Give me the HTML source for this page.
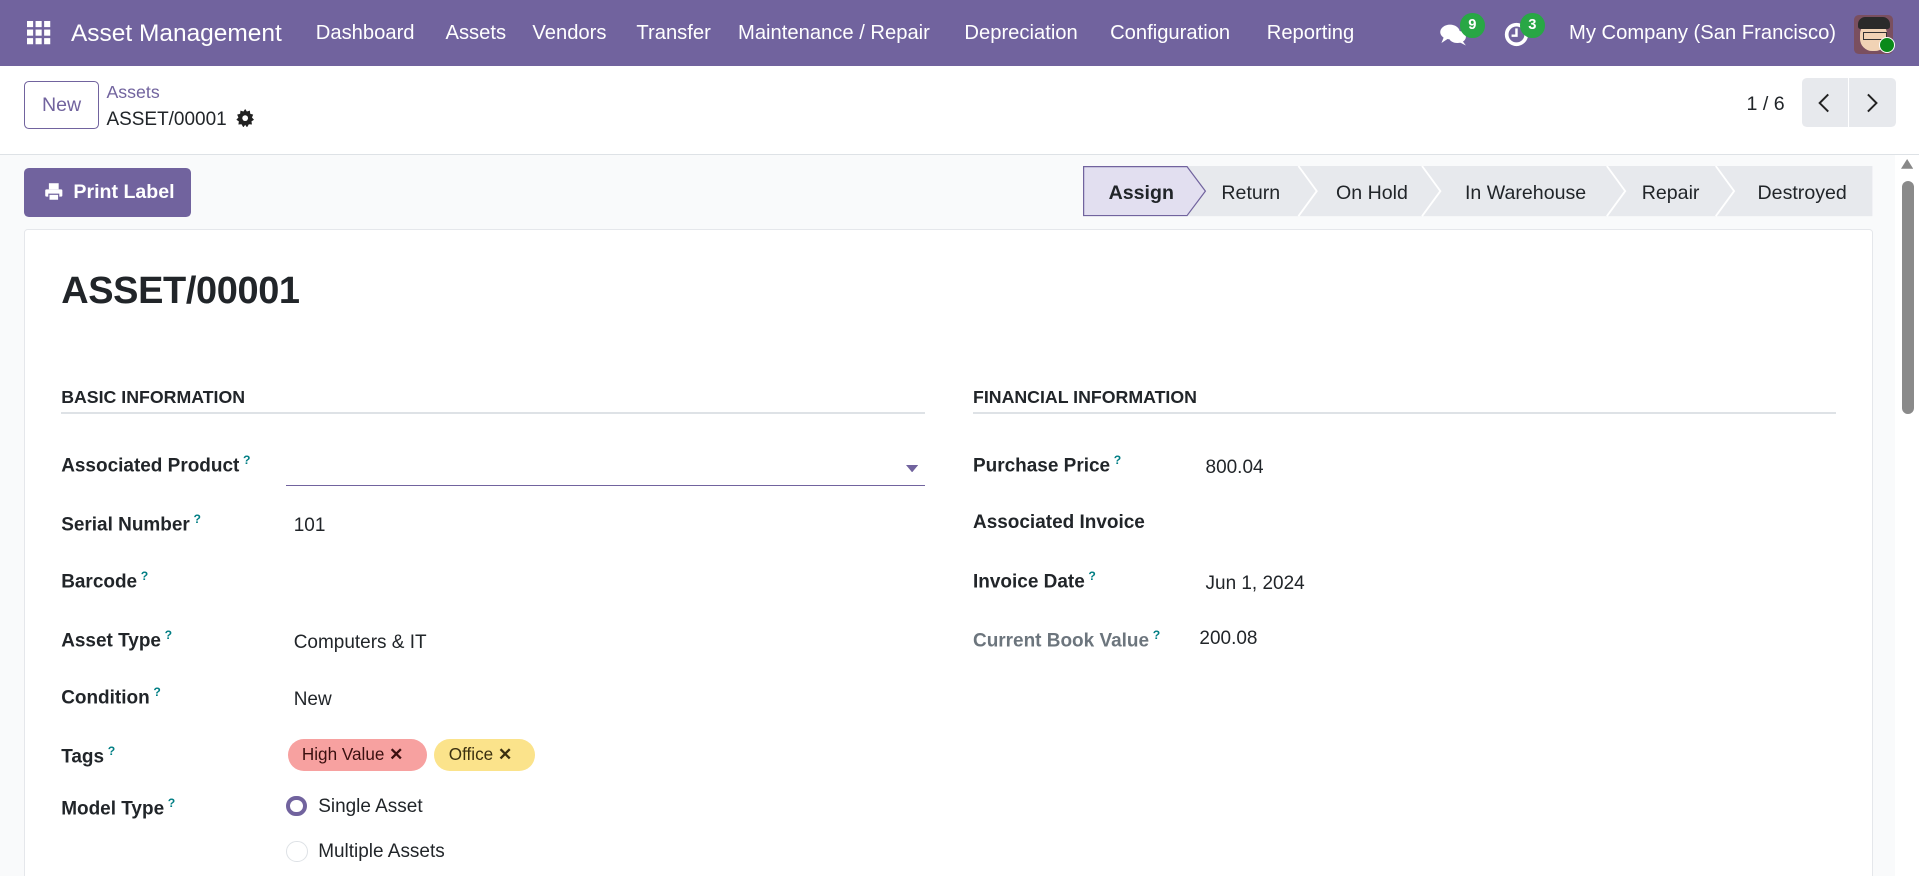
<!DOCTYPE html>
<html><head><meta charset="utf-8"><style>
html,body{margin:0;padding:0;overflow:hidden}
body{zoom:1.2239;width:1568px;height:716px;position:relative;background:#f9fafb;font-family:"Liberation Sans",sans-serif;color:#212529;font-size:15px}
.a{position:absolute}
.nav{left:0;top:0;width:1568px;height:54px;background:#71639e;color:#fff}
.nav span{position:absolute;top:18px;font-size:16.5px;white-space:nowrap}
.cp{left:0;top:54px;width:1568px;height:72px;background:#fff;border-bottom:1px solid #dee2e6}
.lbl{position:absolute;font-weight:bold;font-size:15.5px;white-space:nowrap}
.lbl sup{color:#017e84;font-size:10px;font-weight:bold;margin-left:3px}
.val{position:absolute;font-size:15.5px;white-space:nowrap}
.st{position:absolute;top:2px;height:40px;line-height:40px;font-size:16px;text-align:center}
</style></head><body>
<div class="a nav">
 <svg class="a" style="left:22px;top:17px" width="20" height="20" viewBox="0 0 20 20" fill="#fff"><rect x="0" y="0" width="5" height="5"/><rect x="7" y="0" width="5" height="5"/><rect x="14" y="0" width="5" height="5"/><rect x="0" y="7" width="5" height="5"/><rect x="7" y="7" width="5" height="5"/><rect x="14" y="7" width="5" height="5"/><rect x="0" y="14" width="5" height="5"/><rect x="7" y="14" width="5" height="5"/><rect x="14" y="14" width="5" height="5"/></svg>
 <span style="left:58px;top:16px;font-size:20px">Asset Management</span>
 <span style="left:258px">Dashboard</span>
 <span style="left:364px">Assets</span>
 <span style="left:435px">Vendors</span>
 <span style="left:520px">Transfer</span>
 <span style="left:603px">Maintenance / Repair</span>
 <span style="left:788px">Depreciation</span>
 <span style="left:907px">Configuration</span>
 <span style="left:1035px">Reporting</span>
 <svg class="a" style="left:1176px;top:17px" width="24" height="22" viewBox="0 0 24 22" fill="#fff"><ellipse cx="9" cy="9" rx="8" ry="6"/><path d="M4 13 L2 18 L8 14Z"/><ellipse cx="15" cy="13" rx="7" ry="5"/><path d="M19 16 L22 20 L16 17Z"/></svg>
 <div class="a" style="left:1193px;top:11px;width:20px;height:20px;border-radius:10px;background:#28a745;color:#fff;font-size:12px;font-weight:bold;text-align:center;line-height:20px">9</div>
 <svg class="a" style="left:1228px;top:17px" width="22" height="22" viewBox="0 0 22 22"><circle cx="11" cy="11" r="8" fill="none" stroke="#fff" stroke-width="3"/><path d="M11 6v6h-4" stroke="#fff" stroke-width="2" fill="none"/></svg>
 <div class="a" style="left:1242px;top:11px;width:20px;height:20px;border-radius:10px;background:#28a745;color:#fff;font-size:12px;font-weight:bold;text-align:center;line-height:20px">3</div>
 <span style="left:1282px">My Company (San Francisco)</span>
 <div class="a" style="left:1515px;top:12px;width:32px;height:32px;border-radius:4px;background:#7a4f5f;overflow:hidden"><div class="a" style="left:5px;top:6px;width:22px;height:24px;border-radius:10px;background:#f1d3b5"></div><div class="a" style="left:3px;top:2px;width:26px;height:10px;background:#2a2a2a;border-radius:6px 6px 2px 2px"></div><div class="a" style="left:7px;top:14px;width:18px;height:5px;border:1.5px solid #333"></div></div>
 <div class="a" style="left:1535px;top:30px;width:12px;height:12px;border-radius:7px;background:#0a8a1a;border:1.5px solid #fff"></div>
</div>
<div class="a cp">
 <div class="a" style="left:20px;top:12px;width:59px;height:38px;border:1px solid #71639e;border-radius:4px;color:#71639e;text-align:center;line-height:38px;font-size:16px">New</div>
 <div class="a" style="left:87px;top:13px;color:#71639e;font-size:14.5px">Assets</div>
 <div class="a" style="left:87px;top:35px;font-size:15.5px">ASSET/00001 <svg width="15" height="15" viewBox="0 0 16 16" style="vertical-align:-2px;margin-left:3px"><path d="M8 0l1.5 2.2 2.6-.8.3 2.7 2.6.8-1.1 2.5 1.8 2-2.2 1.4.4 2.7-2.7-.2L9.6 16 8 13.8 6.4 16 4.800 13.300 2.100 13.500 2.500 10.800.3 9.400l1.800-2L1 4.900l2.600-.8.300-2.700 2.600.8z" fill="#222"/><circle cx="8" cy="8" r="2.5" fill="#fff"/></svg></div>
 <div class="a" style="left:1427px;top:22px;font-size:16px">1 / 6</div>
 <div class="a" style="left:1472px;top:10px;width:77px;height:40px;background:#e7e9ed;border-radius:4px"></div>
 <div class="a" style="left:1510px;top:10px;width:1px;height:40px;background:#fff"></div>
 <svg class="a" style="left:1484px;top:21px" width="14" height="18"><path d="M10 2 L3 9 L10 16" stroke="#222" stroke-width="1.6" fill="none"/></svg>
 <svg class="a" style="left:1522px;top:21px" width="14" height="18"><path d="M4 2 L11 9 L4 16" stroke="#222" stroke-width="1.6" fill="none"/></svg>
</div>
<div class="a" style="left:20px;top:137px;width:136px;height:40px;background:#71639e;border-radius:4px;color:#fff;font-weight:bold;font-size:16px;line-height:40px"><svg class="a" style="left:16px;top:12px" width="16" height="16" viewBox="0 0 16 16" fill="#fff"><rect x="4" y="1" width="8" height="5"/><rect x="1" y="6" width="14" height="6" rx="1"/><rect x="4" y="10" width="8" height="5" fill="#fff" stroke="#71639e"/></svg><span class="a" style="left:40px">Print Label</span></div>
<div class="a" style="left:885px;top:136px;width:645px;height:41px">
 <svg class="a" style="left:0;top:0" width="645" height="41">
  <rect x="0" y="0" width="645" height="41" fill="#e7e9ed"/>
  <path d="M0.5 0.5 H85 L100 20.5 L85 40.5 H0.5Z" fill="#e2dff0" stroke="#71639e"/>
  <path d="M176 0 L191 20.5 L176 41 M277 0 L292 20.5 L277 41 M428 0 L443 20.5 L428 41 M517 0 L532 20.5 L517 41" stroke="#fff" stroke-width="1.5" fill="none"/>
 </svg>
 <div class="st" style="left:0;width:95px;font-weight:bold">Assign</div>
 <div class="st" style="left:92px;width:90px">Return</div>
 <div class="st" style="left:186px;width:100px">On Hold</div>
 <div class="st" style="left:290px;width:143px">In Warehouse</div>
 <div class="st" style="left:437px;width:86px">Repair</div>
 <div class="st" style="left:530px;width:115px">Destroyed</div>
</div>
<div class="a" style="left:20px;top:187px;width:1509px;height:540px;background:#fff;border:1px solid #e5e7eb;border-radius:3px"></div>
<div class="a" style="left:50px;top:221px;font-size:31px;font-weight:bold;letter-spacing:-0.3px">ASSET/00001</div>
<div class="lbl" style="left:50px;top:316px;font-size:14.5px">BASIC INFORMATION</div>
<div class="a" style="left:50px;top:337px;width:706px;height:1px;background:#dee2e6"></div>
<div class="lbl" style="left:795px;top:316px;font-size:14.5px">FINANCIAL INFORMATION</div>
<div class="a" style="left:795px;top:337px;width:705px;height:1px;background:#dee2e6"></div>
<div class="lbl" style="left:50px;top:370px">Associated Product<sup>?</sup></div>
<div class="a" style="left:234px;top:396px;width:522px;height:1px;background:#71639e"></div>
<svg class="a" style="left:740px;top:380px" width="10" height="6"><path d="M0 0 H10 L5 6Z" fill="#71639e"/></svg>
<div class="lbl" style="left:50px;top:418px">Serial Number<sup>?</sup></div><div class="val" style="left:240px;top:421px">101</div>
<div class="lbl" style="left:50px;top:465px">Barcode<sup>?</sup></div>
<div class="lbl" style="left:50px;top:513px">Asset Type<sup>?</sup></div><div class="val" style="left:240px;top:516px">Computers &amp; IT</div>
<div class="lbl" style="left:50px;top:560px">Condition<sup>?</sup></div><div class="val" style="left:240px;top:563px">New</div>
<div class="lbl" style="left:50px;top:608px">Tags<sup>?</sup></div>
<div class="a" style="left:235px;top:604px;width:114px;height:26px;border-radius:13px;background:#f7a1a0;font-size:14px;line-height:26px;color:#3b1010">&nbsp;&nbsp;&nbsp;High Value&nbsp;<b>✕</b></div>
<div class="a" style="left:355px;top:604px;width:82px;height:26px;border-radius:13px;background:#fbe38b;font-size:14px;line-height:26px;color:#3b3010">&nbsp;&nbsp;&nbsp;Office&nbsp;<b>✕</b></div>
<div class="lbl" style="left:50px;top:650px">Model Type<sup>?</sup></div>
<div class="a" style="left:234px;top:650px;width:10px;height:10px;border:4px solid #71639e;border-radius:50%;background:#fff"></div>
<div class="val" style="left:260px;top:650px">Single Asset</div>
<div class="a" style="left:234px;top:687px;width:16px;height:16px;border:1px solid #dee2e6;border-radius:50%"></div>
<div class="val" style="left:260px;top:687px">Multiple Assets</div>
<div class="lbl" style="left:795px;top:370px">Purchase Price<sup>?</sup></div><div class="val" style="left:985px;top:373px">800.04</div>
<div class="lbl" style="left:795px;top:418px">Associated Invoice</div>
<div class="lbl" style="left:795px;top:465px">Invoice Date<sup>?</sup></div><div class="val" style="left:985px;top:468px">Jun 1, 2024</div>
<div class="lbl" style="left:795px;top:513px;color:#6c757d">Current Book Value<sup>?</sup></div><div class="val" style="left:980px;top:513px">200.08</div>
<div class="a" style="left:1548px;top:127px;width:20px;height:589px;background:#fff"></div>
<svg class="a" style="left:1553px;top:130px" width="10" height="8"><path d="M0 8 L5 0 L10 8Z" fill="#888"/></svg>
<div class="a" style="left:1554px;top:148px;width:10px;height:190px;border-radius:5px;background:#8a8a8a"></div>
</body></html>
